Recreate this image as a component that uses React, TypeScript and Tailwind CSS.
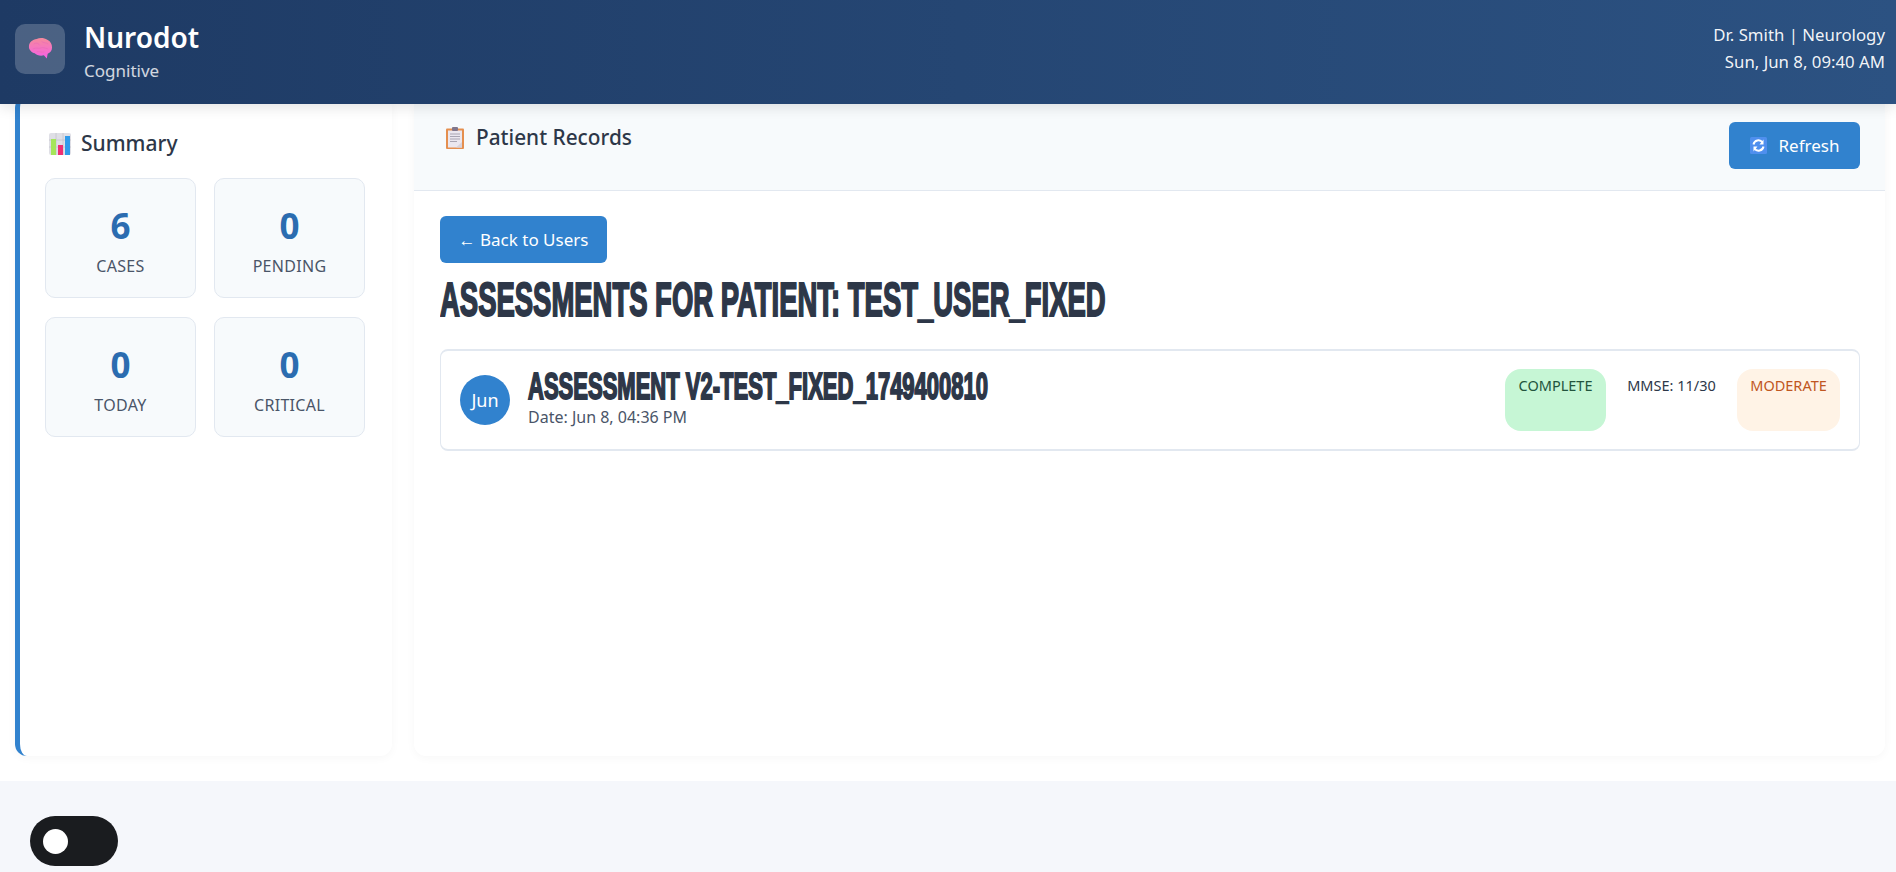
import React from "react";

const sans = "font-['Noto_Sans','Open_Sans',sans-serif]";

function BrainEmoji() {
  return (
    <svg width="25" height="24" viewBox="0 0 26 24" aria-hidden="true">
      <defs>
        <linearGradient id="brainFill" x1="0" y1="0" x2="0" y2="1">
          <stop offset="0" stopColor="#f58a9c" />
          <stop offset="1" stopColor="#f55fe6" />
        </linearGradient>
      </defs>
      <path d="M1 9C1 5 5 2 9 1.500C12 .2 17 .2 20 2.500C23.500 4 25 7 25 10.500C25 14 23 16 20.500 17L19.500 22L16.500 18.500C13 19.500 9 18.500 7 16.500C4 16 .5 13 1 9Z" fill="url(#brainFill)" />
      <path d="M6 7C8 5 11 6 12 8M14 4C16 6 19 5 21 7M5 12C8 10 11 12 13 11C15 10 18 11 21 12M9 15C11 14 14 16 17 15" fill="none" stroke="#e86bb8" strokeWidth=".7" />
    </svg>
  );
}

function ChartEmoji() {
  return (
    <svg width="22" height="22" viewBox="0 0 22 22" aria-hidden="true">
      <rect width="22" height="22" rx="2" fill="#dfdfe6" />
      <path d="M0 7H22M0 14H22M7 0V22M14 0V22" stroke="#c4c4cc" strokeWidth=".8" />
      <rect x="2" y="6" width="5" height="16" fill="#a5e65a" />
      <rect x="9" y="12" width="5" height="10" fill="#ee2f73" />
      <rect x="16" y="3" width="5" height="19" fill="#2f9bea" />
    </svg>
  );
}

function ClipboardEmoji() {
  return (
    <svg width="18" height="22" viewBox="0 0 18 22" aria-hidden="true">
      <rect x="0" y="1.500" width="18" height="20.500" rx="1" fill="#e58f4f" />
      <rect x="2" y="3.500" width="14" height="17" fill="#ebe7ef" />
      <rect x="6" y="0" width="6" height="4" rx="1" fill="#80768c" />
      <path d="M4 7H14M4 9.500H14M4 12H14M4 14.500H11" stroke="#a9a5b3" strokeWidth="1" />
      <path d="M10 20.500L16 15V20.500Z" fill="#d8d3dc" />
    </svg>
  );
}

function RefreshEmoji() {
  return (
    <svg width="17" height="17" viewBox="0 0 17 17" aria-hidden="true">
      <rect width="17" height="17" rx="1.500" fill="#4f8fee" />
      <path d="M3.500 7.500A5 5 0 0 1 12.500 5.500M13.500 9.500A5 5 0 0 1 4.500 11.500" fill="none" stroke="#fff" strokeWidth="2" />
      <path d="M13.500 2.500V7.500H9.500ZM3.500 14.500V9.500H7.500Z" fill="#fff" />
    </svg>
  );
}

function Stat({ value, label }: { value: string; label: string }) {
  return (
    <div className="flex h-[120px] flex-col items-center rounded-[10px] border border-[#e2e8f0] bg-[#f7fafc] pt-[23px]">
      <div className="text-[35px] leading-[48px] font-bold text-[#2b6cb0]">{value}</div>
      <div className="mt-[6px] text-[16px] leading-[20px] tracking-[0.3px] text-[#4a5568] uppercase">{label}</div>
    </div>
  );
}

export default function App() {
  return (
    <div className={`flex h-[872px] flex-col overflow-hidden bg-[#f5f7fb] ${sans}`}>
      <header className="relative z-10 flex h-[104px] shrink-0 items-center justify-between bg-gradient-to-r from-[#1e3a64] to-[#2c5282] pr-[11px] pl-[15px] text-white shadow-[0_4px_12px_rgba(0,0,0,0.1)]">
        <div className="flex items-center gap-[19px]">
          <div className="mt-[-6px] flex h-[50px] w-[50px] items-center justify-center rounded-[10px] bg-white/20">
            <BrainEmoji />
          </div>
          <div className="mt-[-4px]">
            <div className="text-[28px] leading-[38px] font-semibold">Nurodot</div>
            <div className="mt-[4px] text-[17px] leading-[22px] text-white/80">Cognitive</div>
          </div>
        </div>
        <div className="mt-[-8px] text-right text-[16.8px] leading-[27px] text-white/95">
          <div>Dr. Smith | Neurology</div>
          <div>Sun, Jun 8, 09:40 AM</div>
        </div>
      </header>

      <main className="flex h-[677px] shrink-0 gap-[22px] overflow-hidden bg-white pr-[11px] pl-[15px]">
        <aside className="mt-[-8px] mb-[25px] w-[377px] shrink-0 rounded-[12px] border-l-[5px] border-[#3182ce] bg-white pt-[34px] pr-[27px] pl-[25px] shadow-[0_2px_10px_rgba(0,0,0,0.035)]">
          <div className="flex items-center gap-[10px] pl-[4px] text-[21px] leading-[27px] font-medium text-[#2d3748]">
            <ChartEmoji />
            <span>Summary</span>
          </div>
          <div className="mt-[21px] grid grid-cols-2 gap-x-[18px] gap-y-[19px]">
            <Stat value="6" label="Cases" />
            <Stat value="0" label="Pending" />
            <Stat value="0" label="Today" />
            <Stat value="0" label="Critical" />
          </div>
        </aside>

        <section className="mb-[25px] flex-1 rounded-b-[12px] bg-white shadow-[0_2px_10px_rgba(0,0,0,0.035)]">
          <div className="flex h-[87px] items-start justify-between border-b border-[#e2e8f0] bg-[#f7fafc] pt-[18px] pr-[25px] pl-[31px]">
            <div className="flex items-center gap-[12px] pt-[2px] pl-[1px] text-[20.8px] leading-[27px] font-medium text-[#2d3748]">
              <ClipboardEmoji />
              <span>Patient Records</span>
            </div>
            <button className="flex h-[47px] w-[131px] items-center justify-center gap-[12px] rounded-[6px] bg-[#3182ce] text-[17px] text-white">
              <RefreshEmoji />
              <span>Refresh</span>
            </button>
          </div>
          <div className="pt-[25px] pr-[25px] pl-[26px]">
            <button className="flex h-[47px] w-[167px] items-center justify-center rounded-[6px] bg-[#3182ce] text-[17px] text-white">
              ← Back to Users
            </button>
            <h1 className="mt-[9px] h-[56px] w-[1100px] origin-left scale-x-[0.572] font-['Liberation_Sans',sans-serif] text-[48px] leading-[56px] font-bold whitespace-nowrap text-[#2d3748] uppercase [-webkit-text-stroke:2px_#2d3748]">
              Assessments for Patient: TEST_USER_FIXED
            </h1>
            <div className="mt-[21px] flex h-[102px] items-stretch justify-between rounded-[8px] border-t-2 border-r border-b-2 border-l border-[#e2e8f0] bg-white px-[19px] py-[18px]">
              <div className="flex items-center gap-[18px]">
                <div className="flex h-[50px] w-[50px] items-center justify-center rounded-full bg-[#3182ce] text-[18px] text-white">
                  Jun
                </div>
                <div className="mt-[-5px]">
                  <div className="h-[40px] w-[600px] origin-left scale-x-[0.595] font-['Liberation_Sans',sans-serif] text-[37px] leading-[40px] font-bold whitespace-nowrap text-[#2d3748] uppercase [-webkit-text-stroke:2px_#2d3748]">
                    Assessment V2-TEST_FIXED_1749400810
                  </div>
                  <div className="text-[16px] leading-[21px] text-[#4a5568]">Date: Jun 8, 04:36 PM</div>
                </div>
              </div>
              <div className="flex items-stretch gap-[10px] text-[14.5px] leading-[19px]">
                <div className="w-[101px] rounded-[16px] bg-[#c6f6d5] pt-[7px] text-center text-[#22543d]">COMPLETE</div>
                <div className="w-[111px] pt-[7px] text-center text-[#2d3748]">MMSE: 11/30</div>
                <div className="w-[103px] rounded-[16px] bg-[#fff3e6] pt-[7px] text-center text-[#c05621]">MODERATE</div>
              </div>
            </div>
          </div>
        </section>
      </main>

      <div className="pt-[35px] pl-[30px]">
        <button aria-label="Toggle theme" className="flex h-[50px] w-[88px] items-center rounded-full bg-[#1a1c1f] pl-[13px]">
          <span className="h-[25px] w-[25px] rounded-full bg-white" />
        </button>
      </div>
    </div>
  );
}
